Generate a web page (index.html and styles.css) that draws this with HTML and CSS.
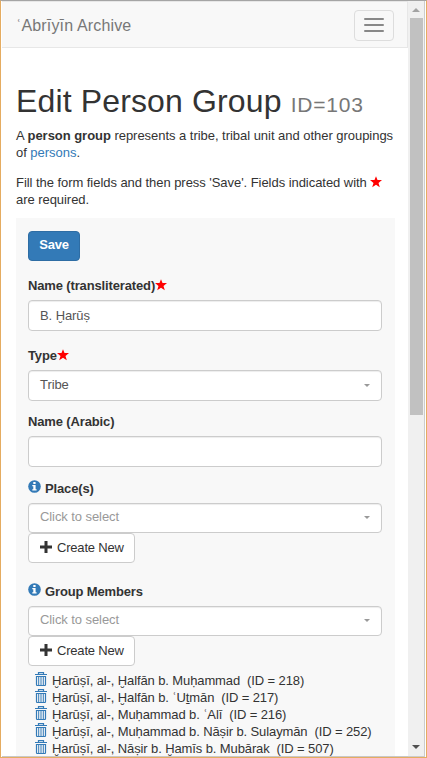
FILE: index.html
```html
<!DOCTYPE html>
<html lang="en">
<head>
<meta charset="utf-8">
<title>Edit Person Group</title>
<link rel="stylesheet" href="styles.css">
</head>
<body>
<svg class="defs" width="0" height="0">
  <symbol id="star" viewBox="0 0 12 12"><path fill="#f00" d="M6 .2 7.5 4.1H12L8.5 6.900 9.800 11.3 6 8.800 2.200 11.3 3.500 6.900 0 4.100H4.500Z"/></symbol>
  <symbol id="info" viewBox="0 0 13 13"><circle cx="6.5" cy="6.5" r="6.3" fill="#337ab7"/><path fill="#fff" d="M5.3 2h2.3v2H5.3ZM4.3 5h3.3v4.2h1v1.3H4.3V9.2h1V6.2h-1Z"/></symbol>
  <symbol id="plus" viewBox="0 0 12 12"><path fill="#333" d="M4.5 0h3v4.500H12v3H7.500V12h-3V7.500H0v-3h4.500Z"/></symbol>
  <symbol id="trash" viewBox="0 0 12 14"><g fill="none" stroke="#337ab7"><path stroke-width="1.2" d="M0 2.500h12M3.500 2V.6h5V2M1.500 4.500h9M1.500 4v8.500q0 1 1 1h7q1 0 1-1V4"/><path d="M3.700 5v8M6 5v8M8.300 5v8"/></g></symbol>
</svg>
<div class="window">
  <div class="page">
    <nav class="navbar">
      <a class="brand">ʿAbrīyīn Archive</a>
      <button class="toggle"><i></i><i></i><i></i></button>
    </nav>
    <main class="content">
      <h1>Edit Person Group <small>ID=103</small></h1>
      <p class="intro">A <b>person group</b> represents a tribe, tribal unit and other groupings<br>of <a>persons</a>.</p>
      <p>Fill the form fields and then press 'Save'. Fields indicated with <svg class="star"><use href="#star"/></svg><br>are required.</p>
      <form class="form">
        <button type="button" class="save">Save</button>
        <div class="field">
          <label>Name (transliterated)<svg class="star"><use href="#star"/></svg></label>
          <div class="control">B. Ḫarūṣ</div>
        </div>
        <div class="field type">
          <label>Type<svg class="star"><use href="#star"/></svg></label>
          <div class="control select">Tribe</div>
        </div>
        <div class="field arabic">
          <label>Name (Arabic)</label>
          <div class="control"></div>
        </div>
        <div class="field places">
          <label><svg class="info"><use href="#info"/></svg>Place(s)</label>
          <div class="control select empty">Click to select</div>
          <button type="button" class="create"><svg class="plus"><use href="#plus"/></svg>Create New</button>
        </div>
        <div class="field members">
          <label><svg class="info"><use href="#info"/></svg>Group Members</label>
          <div class="control select empty">Click to select</div>
          <button type="button" class="create"><svg class="plus"><use href="#plus"/></svg>Create New</button>
        </div>
        <ul>
          <li><svg class="trash"><use href="#trash"/></svg>Ḫarūṣī, al-, Ḫalfān b. Muḥammad&nbsp; (ID = 218)</li>
          <li><svg class="trash"><use href="#trash"/></svg>Ḫarūṣī, al-, Ḫalfān b. ʿUṯmān&nbsp; (ID = 217)</li>
          <li><svg class="trash"><use href="#trash"/></svg>Ḫarūṣī, al-, Muḥammad b. ʿAlī&nbsp; (ID = 216)</li>
          <li><svg class="trash"><use href="#trash"/></svg>Ḫarūṣī, al-, Muḥammad b. Nāṣir b. Sulaymān&nbsp; (ID = 252)</li>
          <li><svg class="trash"><use href="#trash"/></svg>Ḫarūṣī, al-, Nāṣir b. Ḫamīs b. Mubārak&nbsp; (ID = 507)</li>
        </ul>
      </form>
    </main>
  </div>
  <div class="scrollbar"><span class="up"></span><span class="thumb"></span><span class="down"></span></div>
</div>
</body>
</html>
```
FILE: styles.css
```css
* { box-sizing: border-box; }
html, body { margin: 0; height: 758px; overflow: hidden; }
body { font: 13px/17px "Liberation Sans", Arial, sans-serif; letter-spacing: 0; color: #333; background: #fff; }
.defs { position: absolute; }
svg { flex: none; }
.window { height: 758px; display: flex; border: solid #e5ac61; border-width: 0 1px 1px; border-top: 1px solid #a5a5a5; padding-left: 1px; }
.page { width: 406px; overflow: hidden; border-bottom: 1px solid #c8c8c8; }
.navbar { height: 47px; background: #f8f8f8; border: 1px solid #e7e7e7; border-left: 0; display: flex; align-items: center; justify-content: space-between; padding: 0 13px 0 14px; }
.brand { font-size: 16px; line-height: 20px; color: #777; letter-spacing: .15px; padding-top: 2px; }
.toggle { width: 40px; height: 31px; margin: 1px 0 0; padding: 0 9px; border: 1px solid #ddd; border-radius: 4px; background: none; display: flex; flex-direction: column; justify-content: center; gap: 4px; }
.toggle i { height: 2px; background: #888; border-radius: 1px; }
.content { padding: 35px 13px 0 14px; }
h1 { font-size: 32px; line-height: 36px; font-weight: 400; letter-spacing: .14px; margin: 0 0 4px; white-space: nowrap; }
small { font-size: 21px; color: #777; letter-spacing: .8px; }
p { margin: 0 0 13px; white-space: nowrap; letter-spacing: -.05px; }
p.intro { letter-spacing: -.035px; }
p + p { margin-bottom: 10px; }
a { color: #337ab7; }
.star { width: 12px; height: 12px; vertical-align: -1px; }
label .star { margin-top: -2px; }
.form { height: 560px; background: #f8f8f8; padding: 13px 13px 0 12px; }
button { font: inherit; letter-spacing: -.2px; }
.save { display: block; width: 52px; height: 30px; padding: 0 0 3px; font-weight: 700; color: #fff; background: #337ab7; border: 1px solid #2e6da4; border-radius: 4px; }
.field { margin-top: 16px; }
.arabic { margin-top: 12px; }
.places { margin-top: 13px; }
.members { margin-top: 20px; }
label { display: flex; align-items: center; height: 17px; margin-bottom: 6px; font-weight: 700; letter-spacing: -.14px; }
.info { width: 13px; height: 13px; margin: -4px 4px 0 0; }
.control { height: 31px; padding: 6px 11px; border: 1px solid #ccc; border-radius: 4px; background: #fff; color: #555; letter-spacing: -.08px; box-shadow: inset 0 1px 1px rgba(0,0,0,.075); }
.select { display: flex; justify-content: space-between; align-items: center; padding: 0 11px 2px; }
.select::after { content: ""; border: 3px solid transparent; border-top-color: #999; border-bottom: 0; margin-top: 2px; }
.empty { height: 30px; color: #999; padding-bottom: 3px; }
.create { display: flex; align-items: center; width: 107px; height: 30px; padding: 0 0 1px 11px; color: #333; background: #fff; border: 1px solid #ccc; border-radius: 4px; white-space: nowrap; }
.plus { width: 12px; height: 12px; margin: -2px 5px 0 0; }
ul { list-style: none; margin: 6px 0 0 7px; padding: 0; letter-spacing: -.11px; }
li { display: flex; align-items: center; height: 17px; white-space: pre; }
.trash { width: 12px; height: 14px; margin: -4px 5px 0 0; }
.scrollbar { width: 17px; background: #f0f0f0; border: solid #ccc; border-width: 0 1px 1px 0; display: flex; flex-direction: column; align-items: center; }
.up { border: 4px solid transparent; border-bottom-color: #a3a3a3; border-top: 0; margin: 7px 0 6px; }
.thumb { width: 13px; height: 397px; background: #c1c1c1; }
.down { border: 4px solid transparent; border-top-color: #505050; border-bottom: 0; margin: auto 0 7px; }
```
